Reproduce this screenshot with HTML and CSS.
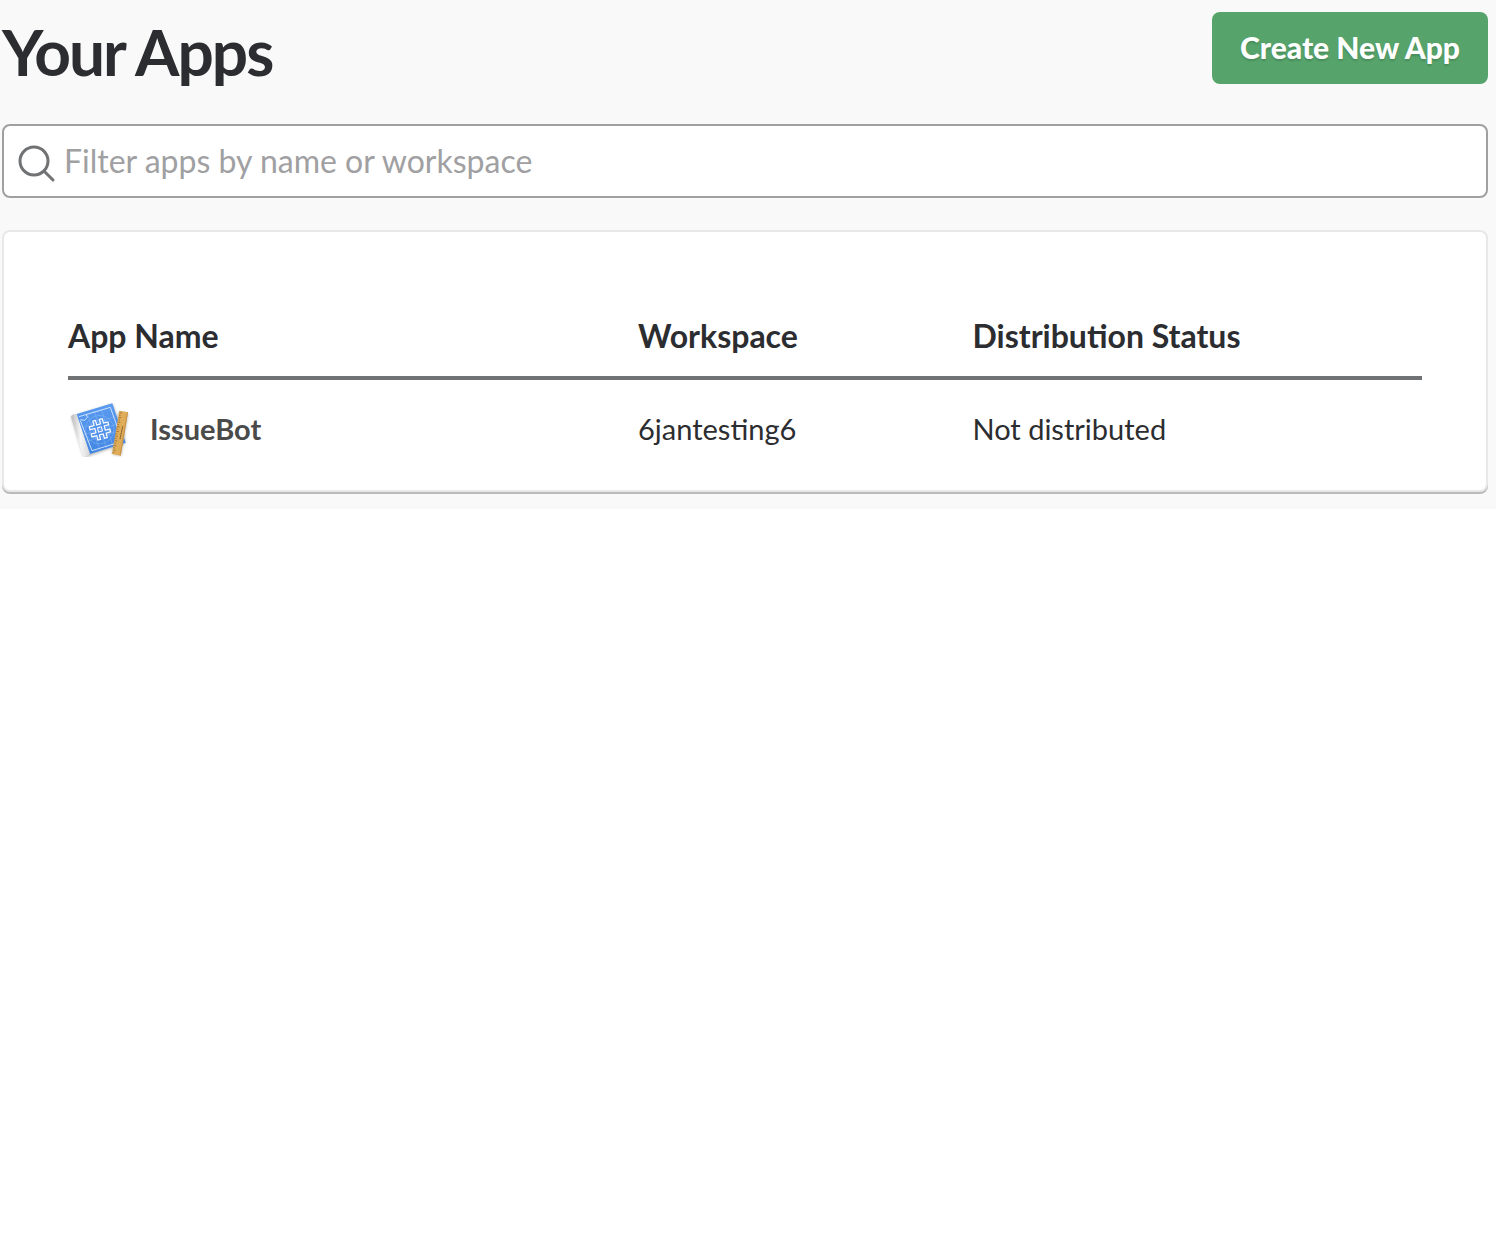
FILE: index.html
```html
<!DOCTYPE html>
<html lang="en">
<head>
<meta charset="utf-8">
<title>Your Apps</title>
<link rel="stylesheet" href="styles.css">
</head>
<body>
<main class="page">
  <header class="page-header">
    <h1 class="title">Your Apps</h1>
    <button class="create-button" type="button">Create New App</button>
  </header>
  <label class="filter">
    <svg class="filter-icon" viewBox="0 0 40 40" aria-hidden="true">
      <circle cx="16" cy="17" r="14"/>
      <path d="M26.200 27.200 35 36"/>
    </svg>
    <input class="filter-input" type="text" aria-label="Filter apps" placeholder="Filter apps by name or workspace">
  </label>
  <section class="card">
    <table class="apps">
      <thead>
        <tr>
          <th class="col-name" scope="col">App Name</th>
          <th class="col-workspace" scope="col">Workspace</th>
          <th scope="col">Distribution Status</th>
        </tr>
      </thead>
      <tbody>
        <tr>
          <td>
            <a class="app-link" href="#issuebot">
              <svg class="app-icon" viewBox="24 18 192 168" aria-hidden="true">
                <defs>
                  <linearGradient id="cover" x1="0" y1="0" x2="0" y2="1">
                    <stop offset="0" stop-color="#5b9bf0"/>
                    <stop offset="1" stop-color="#4286e2"/>
                  </linearGradient>
                  <linearGradient id="spine" x1="0" y1="0" x2="1" y2="0">
                    <stop offset="0" stop-color="#b9b9b9"/>
                    <stop offset=".5" stop-color="#f6f6f6"/>
                    <stop offset="1" stop-color="#d5d5d5"/>
                  </linearGradient>
                  <filter id="soft" x="-20%" y="-20%" width="140%" height="140%">
                    <feGaussianBlur stdDeviation="4"/>
                  </filter>
                </defs>
                <path d="M34 66 158 28 197 144 72 188Z" fill="#000" opacity=".3" filter="url(#soft)"/>
                <path d="M177 50 204 56 183 182 156 177Z" fill="#000" opacity=".3" filter="url(#soft)"/>
                <path d="M33 64Q38 56 51 57L91 176 70 190Z" fill="url(#spine)"/>
                <path d="M50 57 157 25 197 143 90 177Z" fill="url(#cover)"/>
                <g fill="none" stroke="#a5caff" stroke-width="1.500" opacity=".65">
                  <path d="M66 98 163 65M72 119 170 88M79 140 177 107M82 55 119 164M103 49 139 158M124 42 158 151"/>
                  <circle cx="119" cy="104" r="43"/>
                  <circle cx="119" cy="104" r="30"/>
                </g>
                <path d="M57 65 151 37 187 139 96 167 61 77M61 74 74 76 82 67 79 59" fill="none" stroke="#e2efff" stroke-width="2.500"/>
                <g transform="rotate(-15 119 104)">
                  <path d="M106 74h8v14h12v-14h9v14h14v9h-14v13h14v9h-14v14h-9v-14h-12v14h-8v-14h-15v-9h15v-13h-15v-9h15z" fill="none" stroke="#fff" stroke-width="3.500"/>
                  <path d="M114 97h12v13h-12z" fill="none" stroke="#fff" stroke-width="3"/>
                </g>
                <path d="M178 47 204 52 182 182 156 177Z" fill="#dfac58"/>
                <path d="M204 52 182 182 179 181 201 51Z" fill="#c99447"/>
                <path d="M178 53l8 1M177 60l5 1M176 67l8 1M175 74l5 1M173 81l8 1M172 88l5 1M171 95l8 1M170 102l5 1M169 109l8 1M167 116l5 1M166 123l8 1M165 130l5 1M164 137l8 1M163 144l5 1M161 151l8 1M160 158l5 1M159 165l8 1M158 172l5 1" fill="none" stroke="#8c642d" stroke-width="2"/>
                <path d="M188 94 180 133" fill="none" stroke="#765326" stroke-width="3" stroke-dasharray="4 1"/>
              </svg>
              <span>IssueBot</span>
            </a>
          </td>
          <td>6jantesting6</td>
          <td>Not distributed</td>
        </tr>
      </tbody>
    </table>
  </section>
</main>
</body>
</html>
```
FILE: styles.css
```css
* {
  box-sizing: border-box;
}

body {
  margin: 0;
  background: #fff;
  color: #2c2d30;
  font-family: Lato, sans-serif;
}

.page {
  padding: 12px 8px 15px 2px;
  background: #f9f9f9;
}

.page-header {
  display: flex;
  justify-content: space-between;
  align-items: flex-start;
  margin-bottom: 32px;
}

.title {
  margin: 0;
  font-size: 64px;
  line-height: 80px;
  font-weight: 700;
  letter-spacing: -2px;
}

.create-button {
  height: 72px;
  padding: 0 28px 2px;
  border: 0;
  border-radius: 8px;
  background: #56a46b;
  color: #fff;
  font: 900 30px/70px Lato, sans-serif;
  text-shadow: 0 2px 2px rgba(0, 0, 0, 0.15);
}

.filter {
  display: flex;
  align-items: center;
  height: 74px;
  margin-bottom: 32px;
  padding: 0 14px;
  border: 2px solid #a0a0a2;
  border-radius: 8px;
  background: #fff;
}

.filter-icon {
  flex: none;
  width: 40px;
  height: 40px;
  margin: 6px 6px 0 0;
  fill: none;
  stroke: #717274;
  stroke-width: 3;
  stroke-linecap: round;
}

.filter-input {
  flex: 1;
  min-width: 0;
  height: 68px;
  padding: 0 0 2px;
  border: 0;
  outline: 0;
  background: transparent;
  color: #2c2d30;
  font: 400 32px/40px Lato, sans-serif;
}

.filter-input::placeholder {
  color: #a0a0a2;
  opacity: 1;
}

.card {
  margin-bottom: 2px;
  padding: 80px 64px 24px;
  border: 2px solid #e8e8e8;
  border-radius: 8px;
  background: #fff;
  box-shadow: 0 2px 0 #bababa;
}

.apps {
  width: 100%;
  table-layout: fixed;
  border-collapse: collapse;
  text-align: left;
}

.apps th {
  height: 66px;
  padding: 0 0 16px;
  border-bottom: 4px solid #717274;
  font-size: 32px;
  line-height: 46px;
  font-weight: 700;
}

.apps td {
  height: 88px;
  padding: 12px 0 0;
  font-size: 29px;
  line-height: 48px;
  vertical-align: middle;
}

.apps .col-name {
  width: 42.1%;
}

.apps .col-workspace {
  width: 24.7%;
}

.app-link {
  display: flex;
  align-items: center;
  gap: 18px;
  color: #4a4a4a;
  font-weight: 700;
  text-decoration: none;
}

.app-icon {
  flex: none;
  width: 64px;
  height: 56px;
}
```
